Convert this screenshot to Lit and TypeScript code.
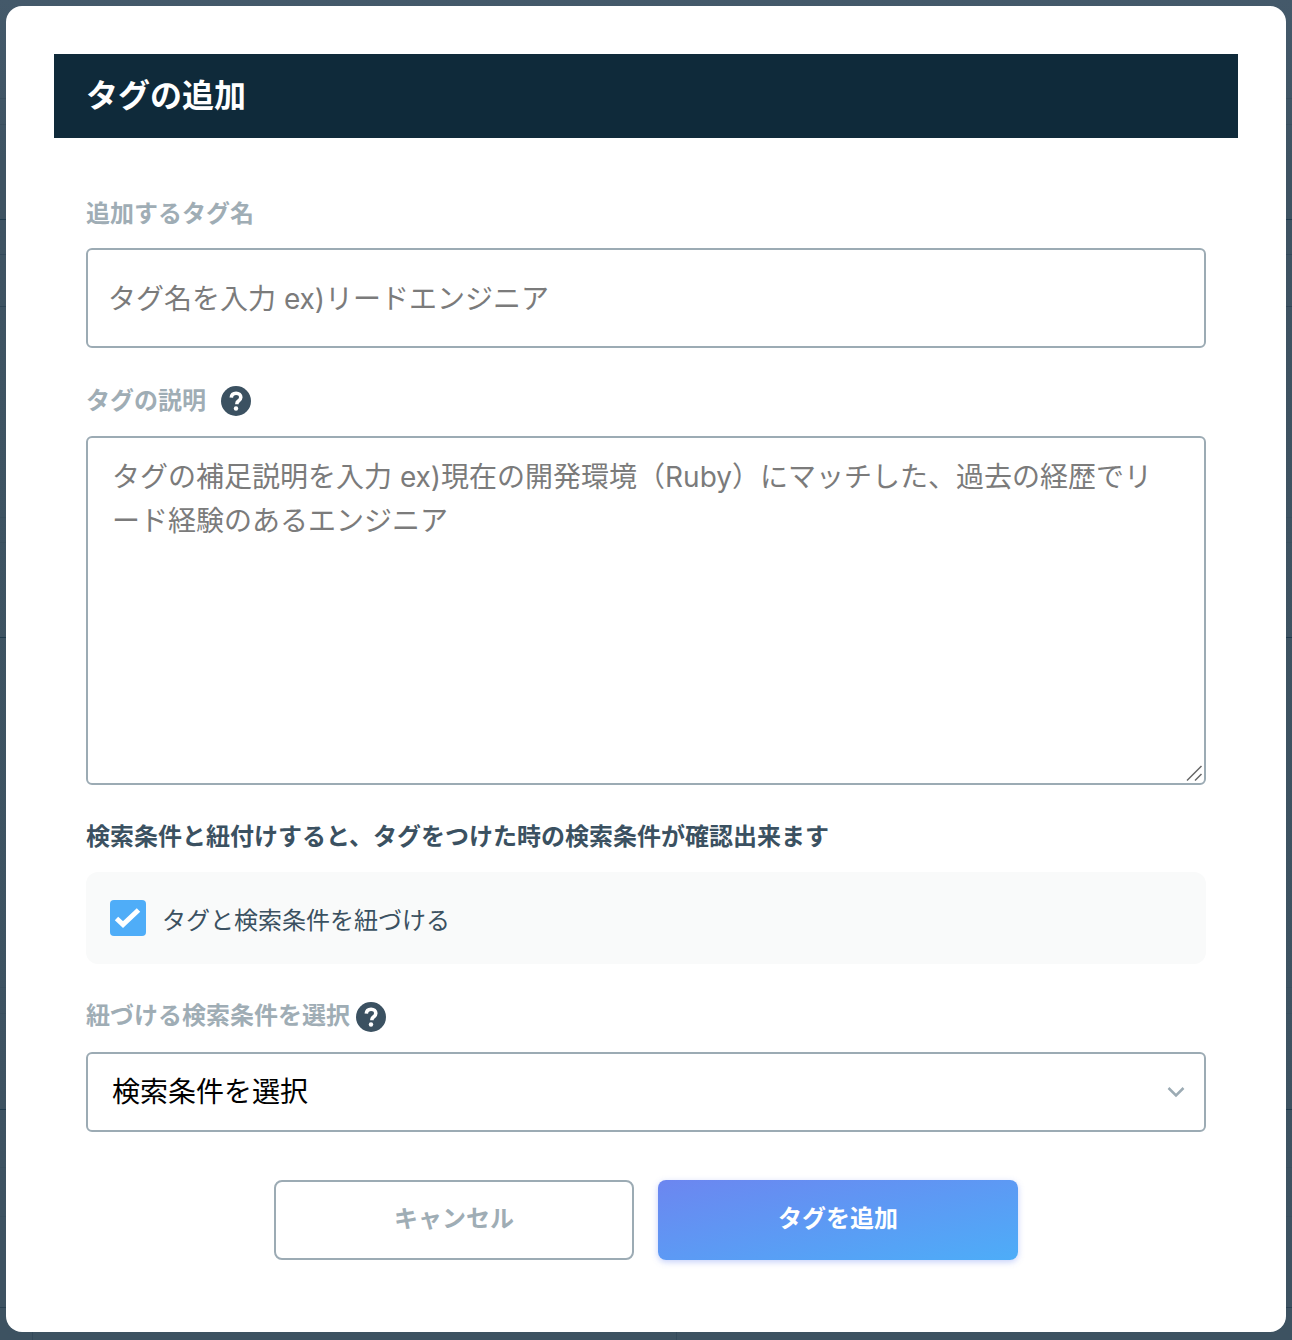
import { LitElement, html, css, svg } from "lit";
import { customElement } from "lit/decorators.js";

const help = html`<svg class="help" viewBox="0 0 30 30" aria-hidden="true">
  <circle cx="15" cy="15" r="15" fill="#3b5161"></circle>
  <path d="M10.300 11.700c.2-2.900 2-4.400 4.800-4.400 2.800 0 4.700 1.600 4.700 4 0 1.700-.9 2.700-2.300 3.700-1.300.9-1.600 1.400-1.600 2.700v.5" fill="none" stroke="#fff" stroke-width="3.600"></path>
  <circle cx="15" cy="22.500" r="2.200" fill="#fff"></circle>
</svg>`;

/* Faint table rules of the page that lies dimmed behind the dialog. */
const rules: [number, string][] = [
  [98, "#3a4f5e"], [124, "#3a4f5e"], [219, "#1f3a4c"], [254, "#33495a"], [306, "#2f4556"],
  [517, "#3a4f5e"], [542, "#3a4f5e"], [637, "#1f3a4c"], [987, "#3a4f5e"], [1013, "#3a4f5e"],
  [1109, "#1f3a4c"], [1167, "#3a4f5e"], [1216, "#3a4f5e"], [1307, "#2a4152"],
];

@customElement("app-root")
export class AppRoot extends LitElement {
  static styles = css`
    :host {
      display: block;
      position: relative;
      width: 1292px;
      height: 1340px;
      box-sizing: border-box;
      padding: 6px;
      overflow: hidden;
      background: linear-gradient(180deg, #44596a 0%, #3e5362 12%, #3d5261 100%);
      font-family: "Noto Sans CJK JP", "Liberation Sans", sans-serif;
    }
    .behind {
      position: absolute;
      inset: 0;
      width: 1292px;
      height: 1340px;
    }
    .modal {
      position: relative;
      box-sizing: border-box;
      width: 1280px;
      height: 1326px;
      padding: 48px;
      background: #fff;
      border-radius: 16px;
    }
    .head {
      box-sizing: border-box;
      height: 84px;
      display: flex;
      align-items: center;
      padding: 0 0 7px 32px;
      background: #0f2a3a;
      color: #fff;
      font-size: 32px;
      font-weight: 700;
    }
    .body {
      padding: 0 32px;
      display: flex;
      flex-direction: column;
    }
    .label {
      display: flex;
      align-items: center;
      height: 34px;
      font-size: 24px;
      font-weight: 700;
      color: #9fadb5;
    }
    .l1 { margin-top: 56px; margin-bottom: 20px; }
    .l2 { margin-top: 33px; margin-bottom: 21px; gap: 15px; }
    .l3 { margin-top: 32px; margin-bottom: 22px; gap: 6px; }
    .help { width: 30px; height: 30px; display: block; margin-top: 6px; }
    .l3 .help { margin-top: 8px; }
    input, textarea, select {
      box-sizing: border-box;
      width: 100%;
      display: block;
      font-family: inherit;
      font-size: 28px;
      border: 2px solid #9cabb4;
      border-radius: 6px;
      background: #fff;
      outline: none;
      margin: 0;
    }
    input, textarea {
      font-family: Inter, "Noto Sans CJK JP", sans-serif;
    }
    input { height: 100px; padding: 2px 20px 0; }
    .area { position: relative; }
    textarea {
      height: 349px;
      padding: 17px 32px 15px 24px;
      line-height: 44px;
      resize: none;
    }
    .grip {
      position: absolute;
      right: 3px;
      bottom: 3px;
      width: 17px;
      height: 17px;
      pointer-events: none;
    }
    input::placeholder, textarea::placeholder { color: #7b7b7b; opacity: 1; }
    .note {
      margin-top: 32px;
      height: 34px;
      display: flex;
      align-items: center;
      font-size: 24px;
      font-weight: 700;
      color: #3b5161;
    }
    .check {
      margin-top: 21px;
      height: 92px;
      display: flex;
      align-items: center;
      gap: 16px;
      padding-left: 24px;
      background: #f9fafa;
      border-radius: 12px;
      font-size: 24px;
      color: #3b5161;
    }
    .box {
      width: 36px;
      height: 36px;
      border-radius: 4px;
      background: #4fadf8;
      display: flex;
      align-items: center;
      justify-content: center;
      flex: none;
    }
    .box svg { width: 36px; height: 36px; display: block; }
    .select-wrap { position: relative; }
    select {
      height: 80px;
      padding: 0 24px 4px;
      color: #000;
      appearance: none;
      -webkit-appearance: none;
    }
    .chev {
      position: absolute;
      right: 21px;
      top: 34px;
      width: 18px;
      height: 12px;
      pointer-events: none;
    }
    .actions {
      display: flex;
      justify-content: center;
      gap: 24px;
      margin-top: 48px;
    }
    button {
      box-sizing: border-box;
      width: 360px;
      height: 80px;
      border-radius: 8px;
      font-family: inherit;
      font-size: 24px;
      font-weight: 700;
      padding: 0 0 8px;
      margin: 0;
    }
    .cancel { background: #fff; border: 2px solid #9cabb4; color: #9fadb5; }
    .submit {
      border: none;
      color: #fff;
      background: linear-gradient(to bottom right, #6c86f0 0%, #4dadf8 100%);
      box-shadow: 0 2px 6px rgba(90, 120, 240, 0.35);
    }
  `;

  render() {
    return html`
      <svg class="behind" viewBox="0 0 1292 1340" aria-hidden="true">
        ${rules.map(([y, c]) => svg`<rect x="0" y=${y} width="1292" height="1" fill=${c}></rect>`)}
        <rect x="32" y="1308" width="1" height="32" fill="#33495a"></rect>
        <rect x="676" y="1308" width="1" height="32" fill="#33495a"></rect>
      </svg>
      <div class="modal">
        <div class="head">タグの追加</div>
        <div class="body">
          <div class="label l1">追加するタグ名</div>
          <input type="text" placeholder="タグ名を入力 ex)リードエンジニア" />
          <div class="label l2">タグの説明 ${help}</div>
          <div class="area">
            <textarea placeholder="タグの補足説明を入力 ex)現在の開発環境（Ruby）にマッチした、過去の経歴でリード経験のあるエンジニア"></textarea>
            <svg class="grip" viewBox="0 0 17 17" aria-hidden="true">
              <path d="M1 15.500L15.500 1M9 15.500L15.500 9" fill="none" stroke="#666" stroke-width="1.500"></path>
            </svg>
          </div>
          <div class="note">検索条件と紐付けすると、タグをつけた時の検索条件が確認出来ます</div>
          <div class="check">
            <span class="box">
              <svg viewBox="0 0 36 36" aria-hidden="true">
                <path d="M6.500 18.500l6.500 6 15.500-14.500" fill="none" stroke="#fff" stroke-width="5"></path>
              </svg>
            </span>
            タグと検索条件を紐づける
          </div>
          <div class="label l3">紐づける検索条件を選択 ${help}</div>
          <div class="select-wrap">
            <select><option>検索条件を選択</option></select>
            <svg class="chev" viewBox="0 0 18 12" aria-hidden="true">
              <path d="M1.500 2l7.500 7.500 7.500-7.500" fill="none" stroke="#9cabb4" stroke-width="2.500"></path>
            </svg>
          </div>
          <div class="actions">
            <button class="cancel">キャンセル</button>
            <button class="submit">タグを追加</button>
          </div>
        </div>
      </div>
    `;
  }
}
